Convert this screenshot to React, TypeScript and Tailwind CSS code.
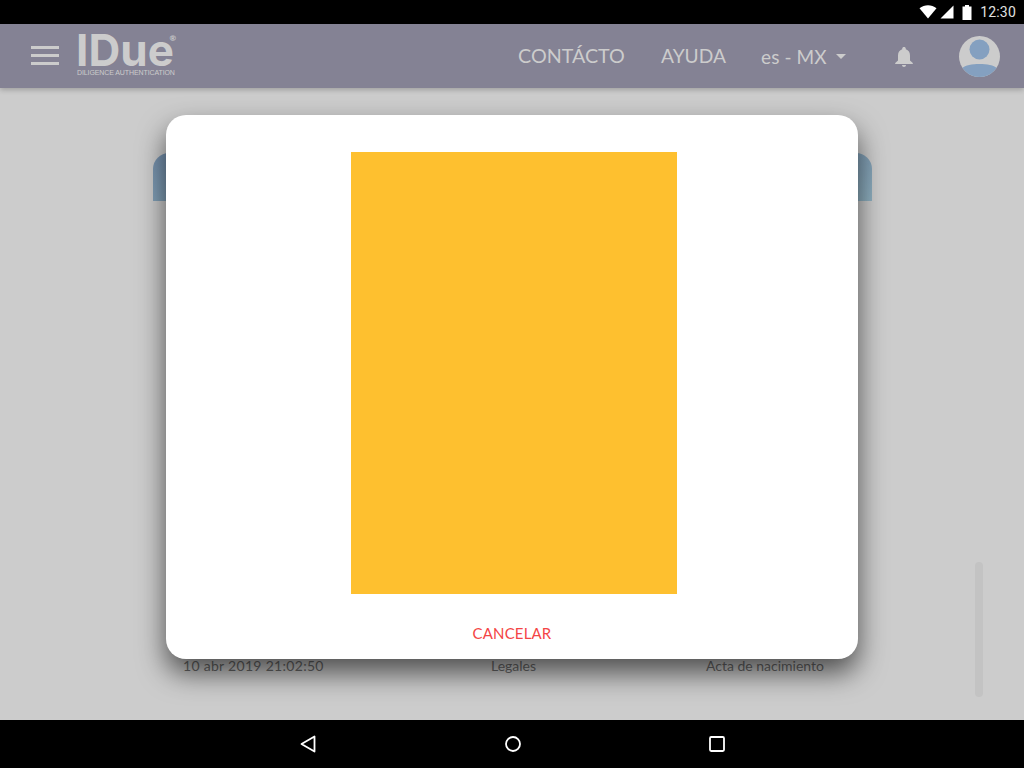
import React from "react";

const font = "font-['Lato','Noto_Sans',sans-serif]";

function StatusBar() {
  return (
    <div className="h-6 bg-black flex items-center justify-end shrink-0 pr-2">
      <svg width="18" height="14" viewBox="0 0 18 14" className="mr-[3px]">
        <path d="M0.5 3.2 C5.5 -0.9 12.5 -0.9 17.5 3.2 L9 13.5 Z" fill="#ffffff" />
      </svg>
      <svg width="14" height="14" viewBox="0 0 14 14" className="mr-2">
        <path d="M13.5 0.5 V13.5 H0.5 Z" fill="#ffffff" />
      </svg>
      <svg width="10" height="15" viewBox="0 0 10 15" className="mr-2">
        <path d="M3 0 H7 V1.5 H9.5 V15 H0.5 V1.5 H3 Z" fill="#ffffff" />
      </svg>
      <span className="font-['Roboto',sans-serif] text-[14px] leading-none text-[#e0e0e0] tracking-[0.2px]">12:30</span>
    </div>
  );
}

function Header() {
  return (
    <div className={`h-16 bg-[#848294] flex items-center shrink-0 shadow-[0_2px_5px_rgba(0,0,0,0.22)] relative z-10 text-[#cccccc] ${font}`}>
      <div className="ml-[31px] w-7 flex flex-col gap-[5px] mt-[-1px]">
        <div className="h-[3px] bg-[#cccccc]" />
        <div className="h-[3px] bg-[#cccccc]" />
        <div className="h-[3px] bg-[#cccccc]" />
      </div>
      <div className="ml-[18px] w-[98px] flex flex-col mt-[-3px]">
        <div className="relative h-[35px]">
          <span className="block ml-[-1px] font-['Inter',sans-serif] font-bold text-[44px] leading-[35px] tracking-[0.1px] text-[#cccccc]">IDue</span>
          <span className="absolute right-[-1px] top-[1px] text-[8px] leading-none font-bold">®</span>
        </div>
        <span className="font-['Liberation_Sans',sans-serif] text-[7px] leading-[8px] mt-[1px] whitespace-nowrap tracking-[-0.1px]">DILIGENCE AUTHENTICATION</span>
      </div>
      <span className="ml-[343px] mt-[-1px] text-[19.7px] leading-none w-[107px] whitespace-nowrap">CONTÁCTO</span>
      <span className="ml-9 mt-[-1px] text-[19.2px] leading-none w-[65px] whitespace-nowrap">AYUDA</span>
      <span className="ml-[35px] text-[19px] leading-none w-[66px] whitespace-nowrap tracking-[0.1px]">es - MX</span>
      <svg width="10" height="5" viewBox="0 0 10 5" className="ml-[9px]">
        <path d="M0 0 H10 L5 5 Z" fill="#cccccc" />
      </svg>
      <svg width="20" height="22" viewBox="0 0 20 22" className="ml-[48px] mt-[2px]">
        <path d="M10 1 C11 1 11.8 1.7 11.8 2.7 V3.3 C14.6 4.1 16 6.5 16 9.4 V14.6 L18.8 17 V18 H1.2 V17 L4 14.6 V9.4 C4 6.5 5.4 4.1 8.2 3.3 V2.7 C8.2 1.7 9 1 10 1 Z M8 19 H12 C12 20.2 11.1 21 10 21 C8.9 21 8 20.2 8 19 Z" fill="#cccccc" />
      </svg>
      <svg width="41" height="41" viewBox="0 0 41 41" className="ml-[45px]">
        <defs>
          <clipPath id="avatarClip"><circle cx="20.5" cy="20.5" r="20.5" /></clipPath>
        </defs>
        <circle cx="20.5" cy="20.5" r="20.5" fill="#cccccc" />
        <g clipPath="url(#avatarClip)">
          <circle cx="20.5" cy="13.5" r="10" fill="#84a0c0" />
          <path d="M3 32 C9 26.5 32 26.5 38 32 L38 41 L3 41 Z" fill="#84a0c0" />
        </g>
      </svg>
    </div>
  );
}

function Content() {
  return (
    <div className={`relative flex-1 bg-[#cccccc] pt-[65px] pl-[153px] pr-[152px] ${font}`}>
      <div className="h-12 rounded-t-[16px] bg-gradient-to-br from-[#7590ad] to-[#8fb0c0]" />
      <div className="mt-[457px] pl-[30px] pr-[48px] flex items-center text-[14px] leading-4 text-[#6a6a6a]">
        <span className="w-[141px] whitespace-nowrap tracking-[0.3px]">10 abr 2019 21:02:50</span>
        <span className="ml-[166px] w-[47px] text-center whitespace-nowrap">Legales</span>
        <span className="ml-auto whitespace-nowrap">Acta de nacimiento</span>
      </div>
      <div className="absolute left-[975px] top-[474px] w-2 h-[135px] rounded bg-[#c3c3c3]" />
    </div>
  );
}

function NavBar() {
  return (
    <div className="h-12 bg-black shrink-0 flex items-center pl-[300px]">
      <svg width="16" height="18" viewBox="0 0 16 18">
        <path d="M14.5 1.5 V16.5 L1.5 9 Z" fill="none" stroke="#ffffff" strokeWidth="1.8" strokeLinejoin="round" />
      </svg>
      <svg width="16" height="16" viewBox="0 0 16 16" className="ml-[189px]">
        <circle cx="8" cy="8" r="7" fill="none" stroke="#ffffff" strokeWidth="1.8" />
      </svg>
      <svg width="16" height="16" viewBox="0 0 16 16" className="ml-[188px]">
        <rect x="1" y="1" width="14" height="14" rx="1.2" fill="none" stroke="#ffffff" strokeWidth="1.8" />
      </svg>
    </div>
  );
}

export default function App() {
  return (
    <div className="relative w-[1024px] h-[768px] overflow-hidden flex flex-col bg-[#cccccc]">
      <StatusBar />
      <Header />
      <Content />
      <NavBar />
      <div className={`absolute left-[166px] top-[115px] z-20 w-[692px] h-[544px] bg-white rounded-[20px] shadow-[0_14px_28px_rgba(0,0,0,0.62)] flex flex-col items-center pt-[37px] ${font}`}>
        <div className="w-[326px] h-[442px] bg-[#fec02f] self-start ml-[185px]" />
        <span className="mt-[30px] text-[15px] leading-[18px] text-[#f44545] tracking-[0.15px]">CANCELAR</span>
      </div>
    </div>
  );
}
